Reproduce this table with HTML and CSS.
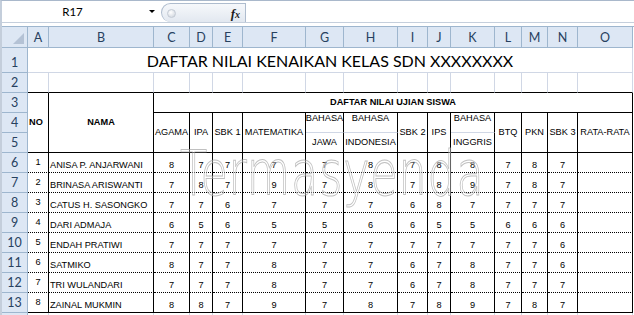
FILE: index.html
```html
<!DOCTYPE html>
<html>
<head>
<meta charset="utf-8">
<title>Daftar Nilai</title>
<link rel="stylesheet" href="styles.css">
</head>
<body>
<div class="app">
  <div class="fbar">
    <div class="namebox"><span class="ref">R17</span><span class="drop"></span></div>
    <div class="fxwrap"><span class="knob"></span><span class="fx">f<span class="fxs">x</span></span></div>
    <div class="finput"></div>
  </div>
  <div class="sep"></div>
  <div class="sheet">
    <div class="corner"><span class="tri"></span></div>
    <div class="ch">A</div><div class="ch">B</div><div class="ch">C</div><div class="ch">D</div><div class="ch">E</div><div class="ch">F</div><div class="ch">G</div><div class="ch">H</div><div class="ch">I</div><div class="ch">J</div><div class="ch">K</div><div class="ch">L</div><div class="ch">M</div><div class="ch">N</div><div class="ch">O</div>

    <div class="rh">1</div>
    <div class="c title">DAFTAR NILAI KENAIKAN KELAS SDN XXXXXXXX</div>

    <div class="rh">2</div>
    <div class="c top"></div><div class="c top"></div><div class="c top"></div><div class="c top"></div><div class="c top"></div><div class="c top"></div><div class="c top"></div><div class="c top"></div><div class="c top"></div><div class="c top"></div><div class="c top"></div><div class="c top"></div><div class="c top"></div><div class="c top"></div><div class="c top"></div>

    <div class="rh">3</div>
    <div class="t no">NO</div>
    <div class="t nama">NAMA</div>
    <div class="t group">DAFTAR NILAI UJIAN SISWA</div>

    <div class="rh">4</div>
    <div class="t h2">AGAMA</div>
    <div class="t h2">IPA</div>
    <div class="t h2">SBK 1</div>
    <div class="t h2">MATEMATIKA</div>
    <div class="t hup">BAHASA</div>
    <div class="t hup">BAHASA</div>
    <div class="t h2">SBK 2</div>
    <div class="t h2">IPS</div>
    <div class="t hup">BAHASA</div>
    <div class="t h2">BTQ</div>
    <div class="t h2">PKN</div>
    <div class="t h2">SBK 3</div>
    <div class="t h2">RATA-RATA</div>

    <div class="rh">5</div>
    <div class="t hlo">JAWA</div>
    <div class="t hlo">INDONESIA</div>
    <div class="t hlo">INGGRIS</div>

    <div class="rh">6</div>
    <div class="d n">1</div><div class="d nm">ANISA P. ANJARWANI</div><div class="d v">8</div><div class="d v">7</div><div class="d v">7</div><div class="d v">7</div><div class="d v">7</div><div class="d v">8</div><div class="d v">7</div><div class="d v">8</div><div class="d v">8</div><div class="d v">7</div><div class="d v">8</div><div class="d v">7</div><div class="d v"></div>

    <div class="rh">7</div>
    <div class="d n">2</div><div class="d nm">BRINASA ARISWANTI</div><div class="d v">7</div><div class="d v">8</div><div class="d v">7</div><div class="d v">9</div><div class="d v">7</div><div class="d v">8</div><div class="d v">7</div><div class="d v">8</div><div class="d v">9</div><div class="d v">7</div><div class="d v">8</div><div class="d v">7</div><div class="d v"></div>

    <div class="rh">8</div>
    <div class="d n">3</div><div class="d nm">CATUS H. SASONGKO</div><div class="d v">7</div><div class="d v">7</div><div class="d v">6</div><div class="d v">7</div><div class="d v">7</div><div class="d v">7</div><div class="d v">6</div><div class="d v">8</div><div class="d v">7</div><div class="d v">7</div><div class="d v">7</div><div class="d v">7</div><div class="d v"></div>

    <div class="rh">9</div>
    <div class="d n">4</div><div class="d nm">DARI ADMAJA</div><div class="d v">6</div><div class="d v">5</div><div class="d v">6</div><div class="d v">5</div><div class="d v">5</div><div class="d v">6</div><div class="d v">6</div><div class="d v">5</div><div class="d v">5</div><div class="d v">6</div><div class="d v">6</div><div class="d v">6</div><div class="d v"></div>

    <div class="rh">10</div>
    <div class="d n">5</div><div class="d nm">ENDAH PRATIWI</div><div class="d v">7</div><div class="d v">7</div><div class="d v">7</div><div class="d v">7</div><div class="d v">7</div><div class="d v">7</div><div class="d v">7</div><div class="d v">7</div><div class="d v">7</div><div class="d v">7</div><div class="d v">7</div><div class="d v">6</div><div class="d v"></div>

    <div class="rh">11</div>
    <div class="d n">6</div><div class="d nm">SATMIKO</div><div class="d v">8</div><div class="d v">7</div><div class="d v">7</div><div class="d v">8</div><div class="d v">7</div><div class="d v">7</div><div class="d v">6</div><div class="d v">7</div><div class="d v">8</div><div class="d v">7</div><div class="d v">7</div><div class="d v">6</div><div class="d v"></div>

    <div class="rh">12</div>
    <div class="d n">7</div><div class="d nm">TRI WULANDARI</div><div class="d v">7</div><div class="d v">7</div><div class="d v">7</div><div class="d v">8</div><div class="d v">7</div><div class="d v">7</div><div class="d v">6</div><div class="d v">7</div><div class="d v">8</div><div class="d v">7</div><div class="d v">7</div><div class="d v">7</div><div class="d v"></div>

    <div class="rh">13</div>
    <div class="d last n">8</div><div class="d last nm">ZAINAL MUKMIN</div><div class="d last v">8</div><div class="d last v">8</div><div class="d last v">7</div><div class="d last v">9</div><div class="d last v">7</div><div class="d last v">8</div><div class="d last v">7</div><div class="d last v">8</div><div class="d last v">9</div><div class="d last v">7</div><div class="d last v">8</div><div class="d last v">7</div><div class="d last v"></div>

    <div class="rh"></div>
    <div class="c"></div><div class="c"></div><div class="c"></div><div class="c"></div><div class="c"></div><div class="c"></div><div class="c"></div><div class="c"></div><div class="c"></div><div class="c"></div><div class="c"></div><div class="c"></div><div class="c"></div><div class="c"></div><div class="c"></div>

    <div class="watermark">Termasyenda</div>
  </div>
</div>
</body>
</html>
```

FILE: styles.css
```css
* { box-sizing: border-box; margin: 0; padding: 0; }

body {
  margin: 0;
  width: 634px;
  height: 315px;
  overflow: hidden;
  background: #ffffff;
}

.app {
  width: 634px;
  height: 315px;
  overflow: hidden;
  background: #ffffff;
  border-top: 1px solid #a9b8cb;
  border-left: 2px solid #c4cedb;
}

/* formula bar */
.fbar {
  display: flex;
  height: 22px;
  border-bottom: 1px solid #c5cfdc;
}

.namebox {
  width: 157px;
  display: flex;
  align-items: center;
}

.ref {
  flex: 1;
  text-align: center;
  font-family: Lato, "Open Sans", sans-serif;
  font-size: 11.5px;
  color: #000;
  padding-right: 6px;
}

.drop {
  width: 0;
  height: 0;
  margin-right: 4px;
  border-left: 3px solid transparent;
  border-right: 3px solid transparent;
  border-top: 3px solid #000;
}

.fxwrap {
  margin-left: 2px;
  width: 85px;
  align-self: flex-end;
  height: 19px;
  border: 1px solid #aebcce;
  border-bottom: none;
  border-radius: 10px 0 0 10px;
  background: linear-gradient(#f6f8fb, #e2e8f0);
  display: flex;
  align-items: center;
  padding-left: 5px;
}

.knob {
  width: 9px;
  height: 9px;
  border-radius: 50%;
  background: radial-gradient(circle at 40% 35%, #ffffff, #c9d0da);
  border: 1px solid #c3cad4;
}

.fx {
  margin-left: auto;
  margin-right: 5px;
  font-family: "Liberation Serif", serif;
  font-style: italic;
  font-weight: bold;
  font-size: 13px;
  color: #1c1c1c;
  line-height: 1;
}

.fxs {
  font-size: 10px;
}

.finput {
  flex: 1;
  background: #fff;
}

.sep {
  height: 4px;
  border-bottom: 1px solid #9eb6ce;
}

/* sheet grid */
.sheet {
  position: relative;
  display: grid;
  grid-template-columns: 26px 21px 105px 36px 23px 30px 63px 38px 54px 30px 23px 44px 27px 26px 30px 55px;
  grid-template-rows: 21px 25px repeat(12, 20px) 20px;
  font-family: "Liberation Sans", Arial, sans-serif;
  font-size: 9.2px;
  color: #000;
}

.corner, .ch, .rh {
  background: #dde7f4;
  border-right: 1px solid #9eb6ce;
  border-bottom: 1px solid #9eb6ce;
  font-family: Lato, "Open Sans", sans-serif;
  font-size: 12.5px;
  color: #27415f;
  line-height: 15px;
  display: flex;
  align-items: flex-end;
  justify-content: center;
  padding-bottom: 2px;
}

.corner {
  position: relative;
}

.tri {
  position: absolute;
  right: 3px;
  bottom: 3px;
  width: 0;
  height: 0;
  border-left: 11px solid transparent;
  border-bottom: 11px solid #b4c2d5;
}

.c {
  border-right: 1px solid #d0d7e5;
  border-bottom: 1px solid #d0d7e5;
}

.c.top {
  border-bottom-color: #000;
}

.title {
  grid-column: span 15;
  display: flex;
  align-items: flex-end;
  justify-content: center;
  font-family: Lato, "Open Sans", sans-serif;
  font-size: 16px;
  line-height: 20px;
  padding-bottom: 1px;
  border-bottom-color: #d0d7e5;
}

.t {
  border-right: 1px solid #000;
  border-bottom: 1px solid #000;
  display: flex;
  align-items: center;
  justify-content: center;
  line-height: 11px;
  white-space: nowrap;
}

.no {
  grid-row: span 3;
  justify-content: flex-start;
  padding-left: 1px;
  font-weight: bold;
}

.nama {
  grid-row: span 3;
  font-weight: bold;
}

.group {
  grid-column: span 13;
  font-weight: bold;
}

.h2 {
  grid-row: span 2;
}

.hup {
  border-bottom-color: #d0d7e5;
  align-items: flex-start;
}

.d {
  border-right: 1px solid #000;
  border-bottom: 1px dotted #000;
  display: flex;
  align-items: flex-end;
  line-height: 11px;
  padding-bottom: 1px;
  white-space: nowrap;
}

.d.last {
  border-bottom: 1px solid #000;
}

.n {
  justify-content: center;
  align-items: center;
  padding-bottom: 0;
}

.nm {
  padding-left: 1px;
}

.v {
  justify-content: center;
}

.watermark {
  position: absolute;
  left: 178px;
  top: 110px;
  font-family: "DejaVu Sans", sans-serif;
  font-weight: 200;
  font-size: 62px;
  letter-spacing: 1px;
  color: rgba(255, 255, 255, 0.35);
  -webkit-text-stroke: 1px rgba(150, 150, 150, 0.6);
  transform: scaleX(0.72);
  transform-origin: left top;
  pointer-events: none;
  white-space: nowrap;
}
```
